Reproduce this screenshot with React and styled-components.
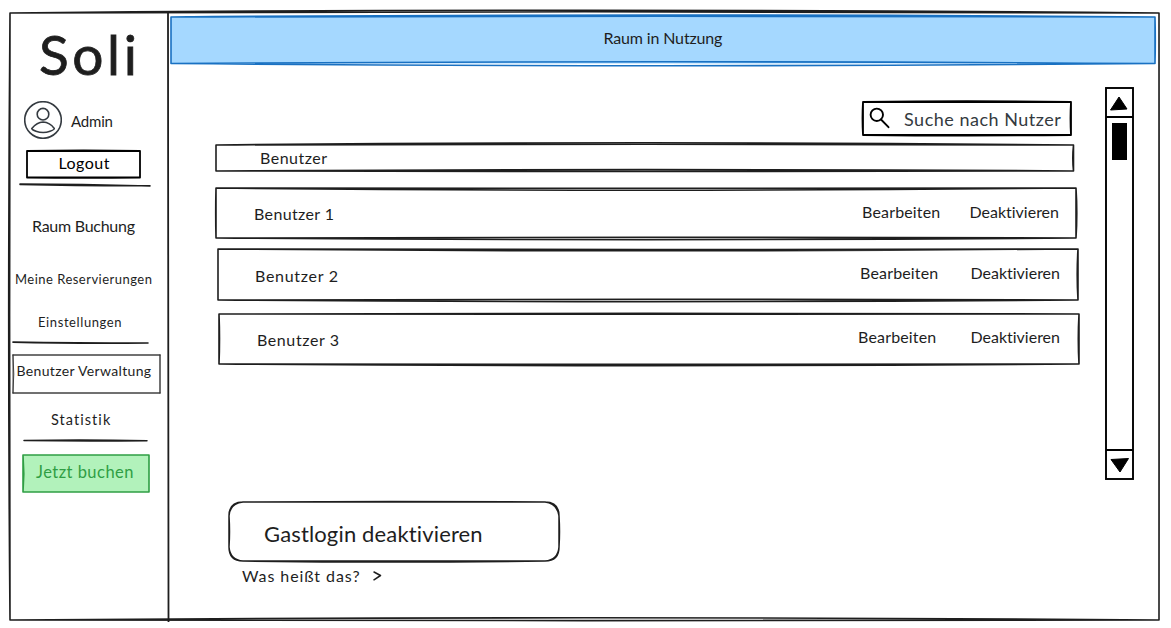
import React from "react";
import styled, { createGlobalStyle } from "styled-components";

const ink = "#1e1e1e";

const GlobalStyle = createGlobalStyle`
  * { box-sizing: border-box; }
  body { margin: 0; background: #fff; }
`;

const Page = styled.div`
  width: 1171px;
  height: 628px;
  padding: 13px 12px 8px 10px;
  background: #fff;
  color: ${ink};
  font-family: Excalifont, Lato, sans-serif;
  font-variant-ligatures: none;
`;

const Frame = styled.div`
  position: relative;
  display: flex;
  width: 1149px;
  height: 607px;
`;

const Sidebar = styled.aside`
  position: relative;
  flex: none;
  width: 158px;
  height: 607px;
  display: flex;
  flex-direction: column;
  align-items: flex-start;
`;

const Main = styled.main`
  flex: 1;
  display: flex;
  flex-direction: column;
`;

const Label = styled.span`
  display: block;
  flex: none;
  height: 20px;
  line-height: 20px;
  white-space: nowrap;
  font-size: ${(p) => p.$size || 16}px;
  letter-spacing: ${(p) => p.$track || 0}px;
  margin-top: ${(p) => p.$top || 0}px;
  margin-left: ${(p) => p.$left || 0}px;
  color: ${(p) => p.$color || "inherit"};
`;

const Logo = styled.h1`
  margin: 11px 0 0 29px;
  height: 60px;
  line-height: 61px;
  font-size: 55px;
  font-weight: 400;
  letter-spacing: 3.6px;
  -webkit-text-stroke: 0.8px ${ink};
`;

const Profile = styled.div`
  display: flex;
  align-items: center;
  gap: 9px;
  height: 38px;
  margin: 17px 0 0 14px;
`;

const Box = styled.div`
  position: relative;
  flex: none;
  display: flex;
  align-items: flex-start;
  width: ${(p) => p.$w}px;
  height: ${(p) => p.$h}px;
  margin-top: ${(p) => p.$top || 0}px;
  margin-left: ${(p) => p.$left || 0}px;
`;

const OutlineSvg = styled.svg`
  position: absolute;
  inset: 0;
  overflow: visible;
  pointer-events: none;
  z-index: ${(p) => (p.$behind ? 0 : 1)};
  & + * { position: relative; z-index: 1; }
`;

const Rule = styled.svg`
  display: block;
  flex: none;
  overflow: visible;
  margin-top: ${(p) => p.$top}px;
  margin-left: ${(p) => p.$left}px;
`;

const SearchIcon = styled.svg`
  flex: none;
  overflow: visible;
`;

const Actions = styled.div`
  display: flex;
  gap: ${(p) => p.$gap}px;
  margin: ${(p) => p.$top}px ${(p) => p.$right}px 0 auto;
`;

const Body = styled.div`
  display: flex;
  flex: 1;
`;

const Content = styled.section`
  width: 938px;
  display: flex;
  flex-direction: column;
  align-items: flex-start;
`;

const Help = styled.div`
  display: flex;
  align-items: center;
  gap: 12px;
  margin: 5px 0 0 74px;
`;

const Scrollbar = styled.svg`
  display: block;
  margin-top: 25px;
  overflow: visible;
`;

/* Each number is how far one pen stroke bows outwards from its edge. */
function Outline({ w, h, top = [0, 0], right = [0, 0], bottom = [0, 0], left = [0, 0], color = ink, pen = 1.6, fill }) {
  const d = [
    ...top.map((b) => `M0 0Q${w / 2} ${-2 * b} ${w} 0`),
    ...right.map((b) => `M${w} 0Q${w + 2 * b} ${h / 2} ${w} ${h}`),
    ...bottom.map((b) => `M${w} ${h}Q${w / 2} ${h + 2 * b} 0 ${h}`),
    ...left.map((b) => `M0 ${h}Q${-2 * b} ${h / 2} 0 0`),
  ].join("");
  return (
    <OutlineSvg width={w} height={h} $behind={!!fill}>
      {fill && <rect width={w} height={h} fill={fill} />}
      <path d={d} fill="none" stroke={color} strokeWidth={pen} strokeLinecap="round" />
    </OutlineSvg>
  );
}

const users = [
  { name: "Benutzer 1", track: 0.37, w: 860, h: 50, top: 17, left: 48, nameX: 38, nameY: 16, actY: 14, gap: 29, right: 17,
    edges: { top: [-0.3, -2.2], bottom: [-0.8, 1.6], right: [0, 0.8], left: [0, 0.3] } },
  { name: "Benutzer 2", track: 0.7, w: 860, h: 51, top: 11, left: 50, nameX: 37, nameY: 17, actY: 14, gap: 32, right: 18,
    edges: { top: [-0.6, -1.8], bottom: [-0.8, 1.6], right: [-0.8, 0], left: [0, 0] } },
  { name: "Benutzer 3", track: 0.59, w: 860, h: 50, top: 14, left: 51, nameX: 38, nameY: 16, actY: 13, gap: 34, right: 19,
    edges: { top: [0.7, -0.3], bottom: [0.4, 1.6], right: [-0.7, 0], left: [0, -0.5] } },
];

export default function App() {
  return (
    <Page>
      <GlobalStyle />
      <Frame>
        <Outline w={1149} h={607} top={[2.8, 1.2]} bottom={[-2.2, 0.6]} left={[0.4, 1.3]} right={[0, 0.2]} />
        <Sidebar>
          <OutlineSvg width="158" height="609">
            <path d="M158 0Q157 300 158.5 609M158 0Q158.5 300 158.5 609" fill="none" stroke={ink} strokeWidth="1.8" />
          </OutlineSvg>
          <Logo>Soli</Logo>
          <Profile>
            <svg width="38" height="38" viewBox="0 0 38 38" fill="none" stroke="#343a40" strokeWidth="1.6">
              <circle cx="19" cy="19" r="18.3" />
              <circle cx="19" cy="13.2" r="5.8" />
              <path d="M7.8 27.5Q13 21.2 19 21Q26 21.400 30.300 27.500Q30.500 28.700 26 30.300Q19 32.800 12 30.200Q8 28.700 7.800 27.500Z" />
            </svg>
            <Label $size={15} $track={-0.2} $top={2}>Admin</Label>
          </Profile>
          <Box $w={113} $h={26.5} $top={12} $left={17}>
            <Outline w={113} h={26.5} color="#000" pen={1.8} top={[0, 0.5]} bottom={[0, 0.3]} />
            <Label $track={0.48} $top={1.5} $left={31.5} $color="#000">Logout</Label>
          </Box>
          <Rule $top={6.5} $left={10} width="130" height="2">
            <path d="M0 0Q60 0 130 2M0 0.4Q60 2 130 1.8" fill="none" stroke={ink} strokeWidth="1.5" strokeLinecap="round" />
          </Rule>
          <Label $track={-0.26} $top={30} $left={22}>Raum Buchung</Label>
          <Label $size={13} $track={0.48} $top={33} $left={5}>Meine Reservierungen</Label>
          <Label $size={13} $track={0.6} $top={23} $left={28}>Einstellungen</Label>
          <Rule $top={10} $left={3} width="135" height="2">
            <path d="M0 0Q60 1 135 1M0 0.2Q60 1.6 135 1" fill="none" stroke={ink} strokeWidth="1.6" strokeLinecap="round" />
          </Rule>
          <Box $w={147} $h={38} $top={11} $left={3}>
            <Outline w={147} h={38} pen={0.9} color="#343434" left={[0, -0.8]} />
            <Label $size={14} $track={0.34} $top={6} $left={3.5}>Benutzer Verwaltung</Label>
          </Box>
          <Label $size={14.5} $track={1.05} $top={17} $left={41}>Statistik</Label>
          <Rule $top={10} $left={14} width="123" height="2">
            <path d="M0 0.5Q60 -0.5 123 0.7M0 0.6Q60 1.2 123 0.7" fill="none" stroke={ink} strokeWidth="1.5" strokeLinecap="round" />
          </Rule>
          <Box $w={126} $h={37} $top={13} $left={13}>
            <Outline w={126} h={37} color="#2f9e44" fill="#b2f2bb" left={[0, -0.8]} />
            <Label $size={16.5} $track={0.47} $top={7} $left={13} $color="#2f9e44">Jetzt buchen</Label>
          </Box>
        </Sidebar>
        <Main>
          <Box $w={984} $h={46.5} $top={3.5} $left={3}>
            <Outline w={984} h={46.5} color="#1971c2" fill="#a5d8ff" top={[0.8, 2]} bottom={[-1.7, 2.2]} right={[0, 0.3]} />
            <Label $track={-0.15} $top={11.5} $left={432.5}>Raum in Nutzung</Label>
          </Box>
          <Body>
            <Content>
              <Box $w={208} $h={33} $top={39} $left={695}>
                <Outline w={208} h={33} color="#000" pen={1.8} top={[0, 0.8]} bottom={[0, 0.5]} left={[0, 0.5]} right={[0, -0.5]} />
                <SearchIcon width="24" height="24" fill="none" stroke="#000" strokeWidth="1.9" strokeLinecap="round">
                  <circle cx="13.8" cy="12.8" r="6.2" />
                  <path d="M18 17.5L25.500 25.200" />
                </SearchIcon>
                <Label $size={18} $track={0.51} $top={6.5} $left={17} $color="#343a40">Suche nach Nutzer</Label>
              </Box>
              <Box $w={857.5} $h={26} $top={10} $left={48}>
                <Outline w={857.5} h={26} top={[0.7, 2.2]} bottom={[-1.4, 0.5]} right={[0, -0.7]} />
                <Label $track={0.48} $top={3} $left={44}>Benutzer</Label>
              </Box>
              {users.map((u) => (
                <Box key={u.name} $w={u.w} $h={u.h} $top={u.top} $left={u.left}>
                  <Outline w={u.w} h={u.h} {...u.edges} />
                  <Label $track={u.track} $top={u.nameY} $left={u.nameX}>{u.name}</Label>
                  <Actions $gap={u.gap} $top={u.actY} $right={u.right}>
                    <Label $track={0.16}>Bearbeiten</Label>
                    <Label>Deaktivieren</Label>
                  </Actions>
                </Box>
              ))}
              <Box $w={330} $h={59} $top={138} $left={61}>
                <OutlineSvg width="330" height="59">
                  <path d="M14 0Q160 -1 316 0Q330 0 330 14Q331 30 330 45Q330 59 316 59Q160 61 14 59Q0 59 0 45V14Q0 0 14 0ZM14 0Q160 .5 316 0Q328 1 330 14Q330 30 330 45Q329 58 316 59Q160 59 14 59Q1 58 0 45Q1 30 0 14Q1 1 14 0Z" fill="none" stroke={ink} strokeWidth="1.5" />
                </OutlineSvg>
                <Label $size={22} $track={0.15} $top={21.5} $left={35}>Gastlogin deaktivieren</Label>
              </Box>
              <Help>
                <Label $track={0.92}>Was heißt das?</Label>
                <svg width="9" height="10" fill="none" stroke={ink} strokeWidth="1.5" strokeLinecap="round" strokeLinejoin="round">
                  <path d="M1 1L7.500 4.500L1 8.800" />
                </svg>
              </Help>
            </Content>
            <Scrollbar width="27" height="391" fill="none" stroke="#000" strokeWidth="1.9">
              <rect width="27" height="391" />
              <path d="M0 29H27M0 362H27" />
              <rect x="6" y="35" width="15" height="37" fill="#000" stroke="none" />
              <path d="M13 9L21 21L4.500 22Z" fill="#000" strokeWidth="1" />
              <path d="M5 371.500L22.500 370.500L14 384Z" fill="#000" strokeWidth="1" />
            </Scrollbar>
          </Body>
        </Main>
      </Frame>
    </Page>
  );
}
